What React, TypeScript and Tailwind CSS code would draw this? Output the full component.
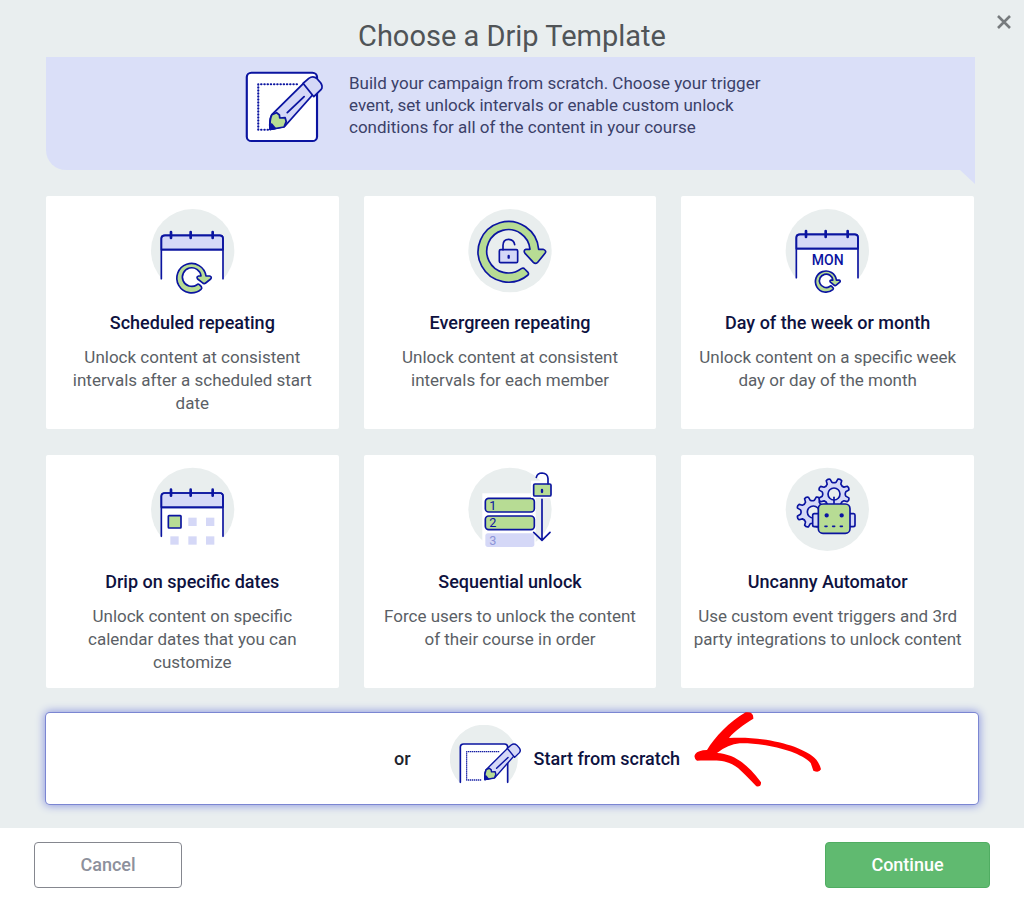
import type { ReactNode } from 'react';

const NAVY = '#0b14a0';
const LILAC = '#d5d8f7';
const GREEN = '#b7dc94';
const PALE = '#e9eeee';

function gearPath(cx: number, cy: number, outer: number, inner: number, teeth: number, phase: number) {
  const points: string[] = [];
  const step = (Math.PI * 2) / teeth;
  for (let i = 0; i < teeth; i++) {
    const a = phase + i * step;
    const at = (offset: number, r: number) =>
      `${(cx + Math.cos(a + offset * step) * r).toFixed(1)} ${(cy + Math.sin(a + offset * step) * r).toFixed(1)}`;
    points.push(`${i === 0 ? 'M' : 'L'}${at(-0.17, outer - 2)}Q${at(0, outer + 2)} ${at(0.17, outer - 2)}`);
    points.push(`L${at(0.27, inner + 2)}Q${at(0.5, inner - 2)} ${at(0.73, inner + 2)}`);
  }
  return `${points.join('')}Z`;
}

function Calendar({ dy = 0 }: { dy?: number }) {
  return (
    <g transform={`translate(0 ${dy})`}>
      <path d="M65 280V116Q65 106 76 106H240Q250 106 250 116V280Z" fill="#fff" stroke="none" />
      <path d="M65 149V116Q65 106 76 106H240Q250 106 250 116V149Z" fill={LILAC} />
      <path d="M65 236V116Q65 106 76 106H240Q250 106 250 116V236M65 149H250" />
      <path d="M94 96V114M153 96V114M219 96V114" strokeWidth="8" />
    </g>
  );
}

function Repeat({ transform }: { transform?: string }) {
  return (
    <path
      transform={transform}
      fill={GREEN}
      d="M184 268A44 44 0 1 1 199 228H210Q218 231 213 237L198 249Q193 253 188 248L174 237Q169 230 177 228H184A28 28 0 1 0 171 255Q175 251 179 254L185 260Q188 264 184 268Z"
    />
  );
}

function Pencil() {
  return (
    <g>
      <path d="M117 344L208 247L236 278L153 379L112 388Q109 362 117 344Z" fill={LILAC} />
      <path d="M117 344L130 338L138 345L139 354L154 353L157 365L151 381L113 388Q109 362 117 344Z" fill={GREEN} />
      <path d="M112 388L116 372L126 385Z" fill={NAVY} />
      <path d="M204 250L220 235Q232 226 243 236L253 248Q261 260 254 269L234 290Z" fill={LILAC} />
      <path d="M207 290L160 338" />
    </g>
  );
}

function IconFrame({ x, y, cx, cy, children }: { x: number; y: number; cx: number; cy: number; children: ReactNode }) {
  return (
    <svg
      className="h-[100px] w-[100px] shrink-0"
      viewBox={`${x} ${y} 300 300`}
      fill="none"
      stroke={NAVY}
      strokeWidth="5"
      strokeLinecap="round"
      strokeLinejoin="round"
      aria-hidden="true"
    >
      <circle cx={cx} cy={cy} r="125" fill={PALE} stroke="none" />
      {children}
    </svg>
  );
}

const scheduledIcon = (
  <IconFrame x={7} y={0} cx={159} cy={152}>
    <Calendar />
    <Repeat />
  </IconFrame>
);

const evergreenIcon = (
  <IconFrame x={15} y={0} cx={165} cy={152}>
    <path
      fill={GREEN}
      d="M219 225A91 91 0 1 1 251 148H264Q276 152 270 160L247 188Q241 193 235 187L210 160Q204 151 213 148H225A65 65 0 1 0 199 206Q205 202 209 207L219 217Q222 222 219 225Z"
    />
    <rect x="133" y="149" width="55" height="39" rx="4" fill={LILAC} />
    <path d="M144 149V136Q144 118 161 118Q177 119 179 134" />
    <path d="M161 168V173" strokeWidth="7" />
  </IconFrame>
);

const weekdayIcon = (
  <IconFrame x={17} y={0} cx={165} cy={152}>
    <g transform="translate(7 -3)">
      <Calendar />
    </g>
    <text
      x="166"
      y="195"
      textAnchor="middle"
      fontFamily="Roboto, sans-serif"
      fontSize="42"
      fontWeight="500"
      fill={NAVY}
      stroke="none"
    >
      MON
    </text>
    <g strokeWidth="7">
      <Repeat transform="translate(49 76) scale(0.72)" />
    </g>
  </IconFrame>
);

const datesIcon = (
  <IconFrame x={7} y={-3} cx={159} cy={148}>
    <Calendar dy={-7} />
    <rect x="86" y="167" width="38" height="37" rx="2" fill={GREEN} />
    <g fill={LILAC} stroke="none">
      <rect x="146" y="173" width="25" height="25" />
      <rect x="199" y="173" width="25" height="25" />
      <rect x="92" y="229" width="25" height="25" />
      <rect x="146" y="229" width="25" height="25" />
      <rect x="199" y="229" width="25" height="25" />
    </g>
  </IconFrame>
);

const sequentialIcon = (
  <IconFrame x={15} y={-3} cx={165} cy={148}>
    <rect x="82" y="100" width="160" height="175" fill="#fff" stroke="none" />
    <rect x="91" y="115" width="147" height="41" rx="10" fill={GREEN} />
    <rect x="91" y="168" width="147" height="41" rx="10" fill={GREEN} />
    <rect x="91" y="220" width="147" height="41" rx="8" fill={LILAC} stroke="none" />
    <g fontFamily="Roboto, sans-serif" fontSize="38" fontWeight="400" fill={NAVY} stroke="none">
      <text x="103" y="149">1</text>
      <text x="103" y="201">2</text>
      <text x="103" y="254" fill="#8d94d8">3</text>
    </g>
    <rect x="228" y="62" width="66" height="52" fill="#fff" stroke="none" />
    <rect x="236" y="72" width="52" height="36" rx="4" fill={GREEN} />
    <path d="M244 52Q247 39 261 39Q278 40 279 56V71M261 118V240M236 217L261 241L285 217" />
    <path d="M261 90V96" strokeWidth="7" />
  </IconFrame>
);

const automatorIcon = (
  <IconFrame x={17} y={-3} cx={165} cy={148}>
    <path d={gearPath(120, 156, 48, 34, 8, 0.39)} fill={LILAC} />
    <circle cx="123" cy="156" r="18" fill={PALE} />
    <path d={gearPath(185, 102, 48, 34, 8, 0.39)} fill={LILAC} />
    <circle cx="185" cy="102" r="18" fill={PALE} />
    <path d="M185 112V130" />
    <path d="M138 161H126Q121 161 121 166V195Q121 200 126 200H138M233 161H244Q248 161 248 166V195Q248 200 243 200H233" fill={LILAC} />
    <rect x="138" y="132" width="95" height="88" rx="14" fill={GREEN} />
    <circle cx="163" cy="166" r="4" fill={NAVY} />
    <circle cx="208" cy="166" r="4" fill={NAVY} />
    <path d="M158 199H164M181 199H187M204 199H210" />
  </IconFrame>
);

const templates: { title: string; text: string; icon: ReactNode }[] = [
  { title: 'Scheduled repeating', text: 'Unlock content at consistent intervals after a scheduled start date', icon: scheduledIcon },
  { title: 'Evergreen repeating', text: 'Unlock content at consistent intervals for each member', icon: evergreenIcon },
  { title: 'Day of the week or month', text: 'Unlock content on a specific week day or day of the month', icon: weekdayIcon },
  { title: 'Drip on specific dates', text: 'Unlock content on specific calendar dates that you can customize', icon: datesIcon },
  { title: 'Sequential unlock', text: 'Force users to unlock the content of their course in order', icon: sequentialIcon },
  { title: 'Uncanny Automator', text: 'Use custom event triggers and 3rd party integrations to unlock content', icon: automatorIcon },
];

function Banner() {
  return (
    <section className="relative mr-[3px] flex min-h-[113px] items-start rounded-bl-[20px] bg-[#dadff8] pt-3 pl-[199px]">
      <svg
        className="h-20 w-[86px] shrink-0"
        viewBox="42 207 240 240"
        preserveAspectRatio="none"
        fill="none"
        stroke={NAVY}
        strokeWidth="5"
        strokeLinecap="round"
        strokeLinejoin="round"
        aria-hidden="true"
      >
        <rect x="47" y="218" width="196" height="205" rx="13" fill="#fff" strokeWidth="6" />
        <path d="M187 253H79V389H112" strokeDasharray="1 8" strokeWidth="6" />
        <Pencil />
      </svg>
      <p className="ml-[18px] max-w-[420px] pt-[3px] text-[17px] leading-[22px] text-[#3b4169]">
        Build your campaign from scratch. Choose your trigger event, set unlock intervals or enable custom unlock
        conditions for all of the content in your course
      </p>
      <span className="absolute top-full right-0 h-[14px] w-[15px] bg-[#dadff8] [clip-path:polygon(0_0,100%_0,100%_100%)]" />
    </section>
  );
}

function ScratchOption() {
  return (
    <button
      type="button"
      className="mt-[25px] flex min-h-[91px] w-full items-center rounded-[4px] bg-white pl-[348px] text-lg font-medium shadow-[0_0_0_1px_#7b86d2,0_0_8px_2px_#929ce0]"
    >
      <span className="text-[#20232c]">or</span>
      <svg
        className="mb-2 ml-[39px] h-[60px] w-[72px] shrink-0"
        viewBox="60 74 216 180"
        fill="none"
        stroke={NAVY}
        strokeWidth="4"
        strokeLinecap="round"
        strokeLinejoin="round"
        aria-hidden="true"
      >
        <path d="M88 246A102 102 0 1 1 235 246Z" fill={PALE} stroke="none" />
        <path d="M91 254V141Q91 131 101 131H223Q233 131 233 141V254Z" fill="#fff" stroke="none" />
        <path d="M91 246V141Q91 131 101 131H223Q233 131 233 141V246" strokeWidth="5" />
        <path d="M206 154H110V239H157" strokeDasharray="1 5" />
        <g transform="translate(83 -26) scale(0.73 0.68)" strokeWidth="6">
          <Pencil />
        </g>
      </svg>
      <span className="relative ml-3 text-[#0e123f]">
        Start from scratch
        <svg
          className="absolute top-1/2 left-full ml-3 h-20 w-[130px] -translate-y-1/2"
          viewBox="787 55 390 240"
          overflow="visible"
          aria-hidden="true"
        >
          <path
            fill="#ff0000"
            d="M797 160Q805 149 832 148C855 110 900 62 948 35Q972 31 971 54C945 70 915 90 898 112C990 105 1120 132 1160 177Q1170 190 1174 206Q1168 218 1151 210Q1146 195 1143 187C1110 150 1000 126 930 128Q895 131 862 157C910 160 950 185 994 245Q995 259 980 257Q950 225 925 202C890 175 860 180 802 180Q790 171 797 160Z"
          />
        </svg>
      </span>
    </button>
  );
}

export default function App() {
  return (
    <main className="flex min-h-screen flex-col bg-white font-['Roboto',sans-serif]">
      <div className="relative flex-1 bg-[#e9eeef] px-[46px] pb-6">
        <h1 className="flex h-[57px] items-end justify-center pb-1 text-[29px] leading-[34px] text-[#505457]">
          Choose a Drip Template
        </h1>
        <button type="button" aria-label="Close" className="absolute top-3 right-2.5 p-0.5 text-[#777b7e]">
          <svg className="size-4" viewBox="0 0 16 16" stroke="currentColor" strokeWidth="2.6" aria-hidden="true">
            <path d="M2 2L14 14M14 2L2 14" />
          </svg>
        </button>
        <Banner />
        <div className="mt-[26px] mr-1 grid grid-cols-3 gap-x-[25px] gap-y-[26px]">
          {templates.map(({ title, text, icon }) => (
            <button
              key={title}
              type="button"
              className="flex min-h-[233px] flex-col items-center rounded-[2px] bg-white px-3 pt-1 text-center"
            >
              {icon}
              <span className="mt-3 text-lg leading-[22px] font-medium text-[#0e123f]">{title}</span>
              <span className="mt-3 text-[17px] leading-[23px] text-[#5b5f66]">{text}</span>
            </button>
          ))}
        </div>
        <ScratchOption />
      </div>
      <footer className="flex items-start justify-between bg-white px-[34px] pt-[14px] pb-[9px] text-lg">
        <button
          type="button"
          className="h-[46px] w-[148px] rounded-[4px] border border-[#85878f] font-medium text-[#8d909c]"
        >
          Cancel
        </button>
        <button
          type="button"
          className="h-[46px] w-[165px] rounded-[4px] border border-[#50ad62] bg-[#60ba70] font-medium text-white"
        >
          Continue
        </button>
      </footer>
    </main>
  );
}
